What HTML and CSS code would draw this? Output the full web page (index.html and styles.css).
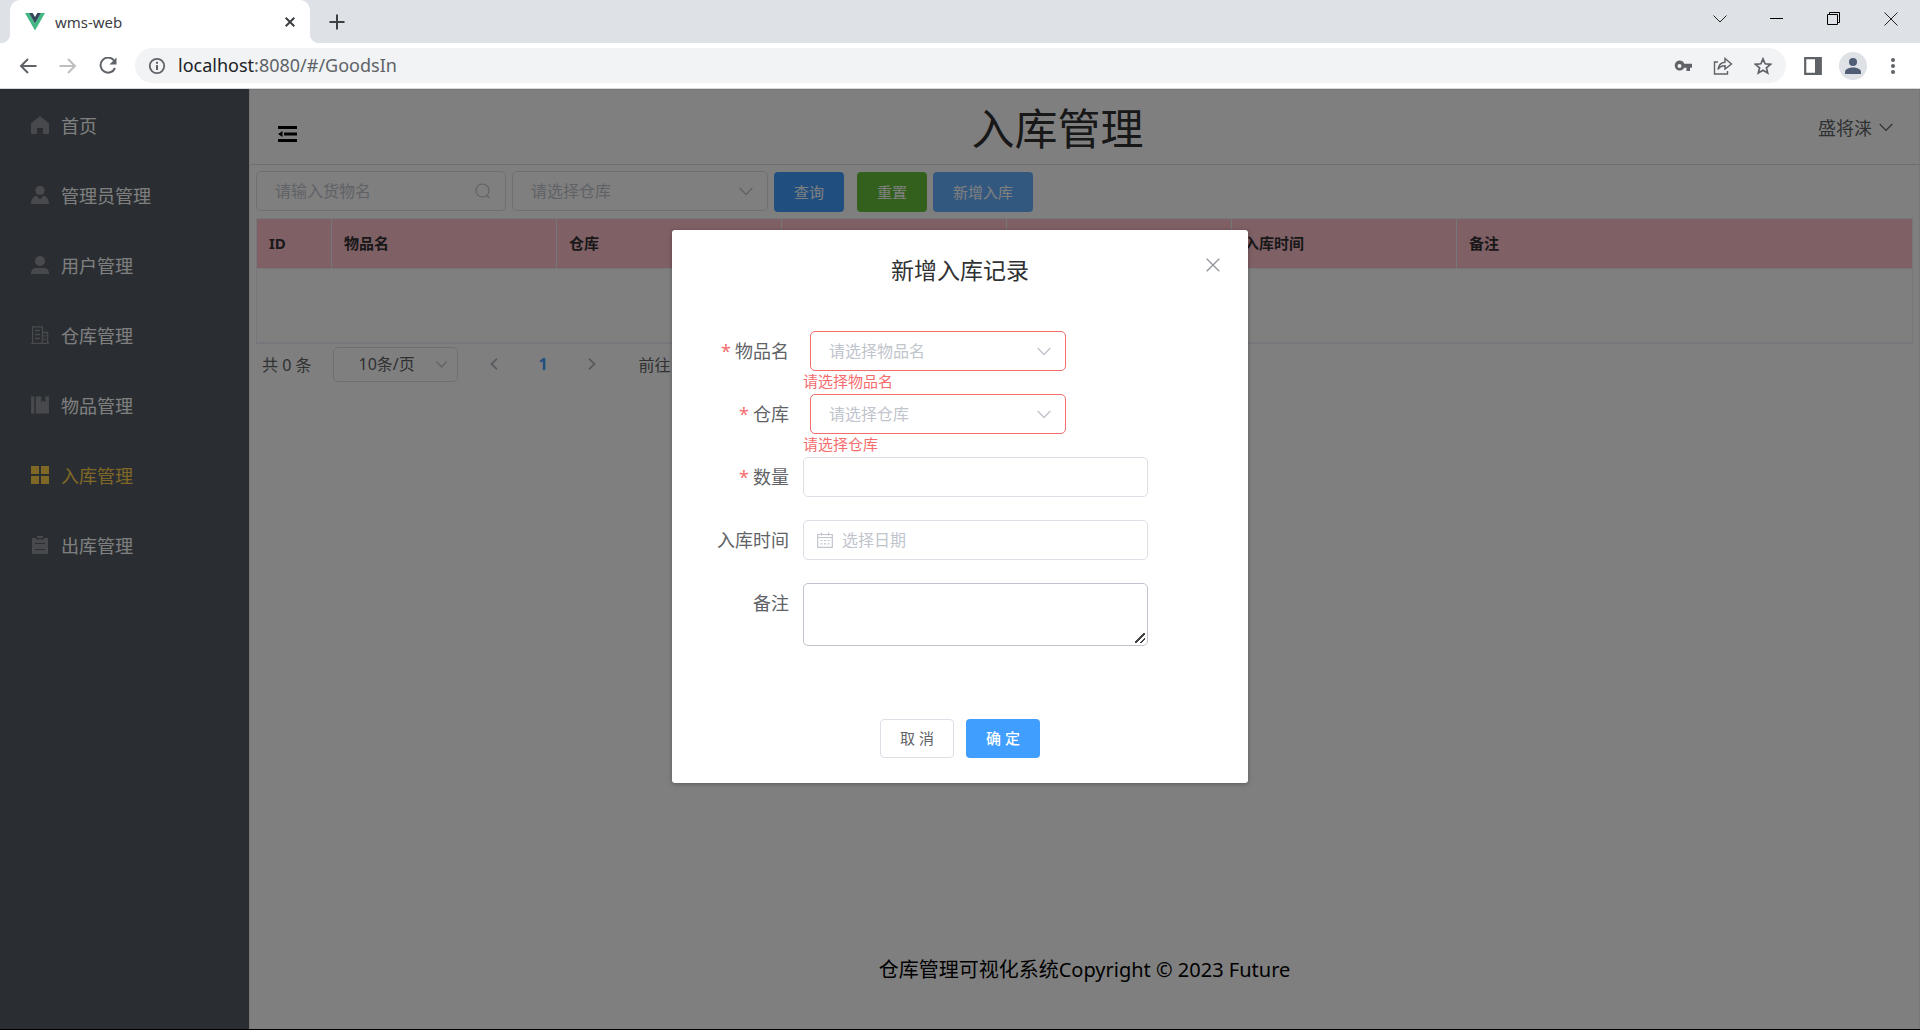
FILE: index.html
```html
<!DOCTYPE html>
<html lang="zh-CN">
<head>
<meta charset="utf-8">
<title>wms-web</title>
<link rel="stylesheet" href="styles.css">
</head>
<body>
<header class="browser">
  <div class="tab-strip">
    <div class="tab">
      <svg class="favicon" width="20" height="18" viewBox="0 0 20 18"><path fill="#41b883" d="M0 0h4l6 10.500 6-10.500h4L10 17.500z"/><path fill="#35495e" d="M4 0h3.700L10 4l2.300-4H16l-6 10.500z"/></svg>
      <span class="tab-title">wms-web</span>
      <button class="tab-close" aria-label="关闭标签页"><svg width="10" height="10" viewBox="0 0 10 10"><path d="M.7.7l8.600 8.600M9.300.7L.7 9.300" stroke="#3c4043" stroke-width="2"/></svg></button>
    </div>
    <button class="tab-new" aria-label="新标签页"><svg width="16" height="16" viewBox="0 0 16 16"><path d="M8 .5v15M.5 8h15" stroke="#3c4043" stroke-width="2"/></svg></button>
    <div class="window-controls">
      <button aria-label="搜索标签页"><svg width="14" height="8" viewBox="0 0 14 8"><path d="M.5.500L7 7 13.500.5" fill="none" stroke="#222"/></svg></button>
      <button aria-label="最小化"><svg width="13" height="3" viewBox="0 0 13 3"><path d="M0 1.500h13" stroke="#000"/></svg></button>
      <button aria-label="还原"><svg width="13" height="13" viewBox="0 0 13 13"><path d="M.5 2.500h10v10H.500zM2.500 2.500v-2h10v10h-2" fill="none" stroke="#000"/></svg></button>
      <button aria-label="关闭"><svg width="14" height="14" viewBox="0 0 14 14"><path d="M.5.500l13 13M13.500.500l-13 13" stroke="#222"/></svg></button>
    </div>
  </div>
  <div class="toolbar">
    <button aria-label="后退"><svg width="18" height="16" viewBox="0 0 18 16"><path d="M17.500 8H2M9 1L2 8l7 7" fill="none" stroke="#5f6368" stroke-width="2"/></svg></button>
    <button aria-label="前进"><svg width="18" height="16" viewBox="0 0 18 16"><path d="M.5 8H16M9 1l7 7-7 7" fill="none" stroke="#bdbfc1" stroke-width="2"/></svg></button>
    <button aria-label="重新加载"><svg width="18" height="18" viewBox="0 0 18 18"><path d="M15 3.500A7.500 7.500 0 1 0 16 11" fill="none" stroke="#5f6368" stroke-width="2"/><path d="M17.500.5v7h-7z" fill="#5f6368"/></svg></button>
    <div class="address">
      <svg width="18" height="18" viewBox="0 0 18 18"><circle cx="9" cy="9" r="7.200" fill="none" stroke="#5f6368" stroke-width="1.800"/><path d="M9 8v5M9 4.700v2" stroke="#5f6368" stroke-width="2"/></svg>
      <span class="url">localhost<span class="url-rest">:8080/#/GoodsIn</span></span>
      <button aria-label="密码"><svg width="18" height="12" viewBox="0 0 18 12"><path fill="#5f6368" fill-rule="evenodd" d="M5.500.5a5 5 0 0 1 4.700 3.300H18v4h-2V11h-3.500V7.800h-2.300A5 5 0 1 1 5.500.500zm0 3.500a2 2 0 1 0 0 4 2 2 0 0 0 0-4z"/></svg></button>
      <button aria-label="分享"><svg width="20" height="18" viewBox="0 0 20 18"><path d="M5 5H1.500v12h13v-3M5 12.500c.5-4.500 3-7 7-7.300V1.500L18.500 7 12 12V8.700c-3 0-5.500 1-7 3.800z" fill="none" stroke="#5f6368" stroke-width="1.400"/></svg></button>
      <button aria-label="收藏"><svg width="18" height="18" viewBox="0 0 18 18"><path d="M9 1.800l2.100 5 5.400.5-4.100 3.500 1.300 5.300L9 13.300l-4.700 2.800 1.300-5.300-4.100-3.500 5.400-.5z" fill="none" stroke="#5f6368" stroke-width="1.700"/></svg></button>
    </div>
    <button class="side-panel" aria-label="侧边栏"><svg width="18" height="18" viewBox="0 0 18 18"><path d="M1.200 1.200h15.600v15.600H1.200z" fill="none" stroke="#5f6368" stroke-width="2.200"/><path d="M11 1h6v16h-6z" fill="#5f6368"/></svg></button>
    <button aria-label="用户"><svg width="28" height="28" viewBox="0 0 28 28"><circle cx="14" cy="14" r="14" fill="#dee1e6"/><circle cx="14" cy="10" r="4" fill="#4f5d75"/><path d="M6 22v-2c0-3 4-4.500 8-4.500s8 1.500 8 4.500v2z" fill="#4f5d75"/></svg></button>
    <button aria-label="更多"><svg width="4" height="16" viewBox="0 0 4 16"><g fill="#5f6368"><circle cx="2" cy="2" r="2"/><circle cx="2" cy="8" r="2"/><circle cx="2" cy="14" r="2"/></g></svg></button>
  </div>
</header>

<div class="app">
  <nav class="sidebar">
    <a href="#/Home"><svg viewBox="0 0 18 18"><path d="M9 0L0 7.500V18h6v-6h6v6h6V7.500z"/></svg>首页</a>
    <a href="#/Admin"><svg viewBox="0 0 18 18"><circle cx="9" cy="4.500" r="4.600"/><path d="M0 18c0-4 2-7.500 5.500-8.500L9 13.500l3.500-4C16 10.500 18 14 18 18z"/></svg>管理员管理</a>
    <a href="#/User"><svg viewBox="0 0 18 18"><circle cx="9" cy="5" r="5"/><path d="M0 18c0-4 2-6 5-6h8c3 0 5 2 5 6z"/></svg>用户管理</a>
    <a href="#/Storage"><svg viewBox="0 0 18 18"><path d="M1.600 17V.800h9.800V17M11.400 6.500h5.200V17M0 17.300h18M4 4.500h5M4 8.500h5M4 12.500h5M12.500 9.800h2.500M12.500 13.300h2.500" fill="none" stroke="#909399" stroke-width="1.300"/></svg>仓库管理</a>
    <a href="#/Goods"><svg viewBox="0 0 18 18"><path d="M0 .5h3.300v17H0zM4.800.500h5.500v6l2-2 2 2v-6H18v17H4.800z"/></svg>物品管理</a>
    <a href="#/GoodsIn" class="active"><svg viewBox="0 0 18 18"><path d="M0 0h8v8H0zM10 0h8v8h-8zM0 10h8v8H0zM10 10h8v8h-8z"/></svg>入库管理</a>
    <a href="#/GoodsOut"><svg viewBox="0 0 18 18"><path fill-rule="evenodd" d="M6 0h6v2H6zM1 2h4v1.500h8V2h4v16H1zM4 7v1h10V7zM4 13v1h10v-1z"/></svg>出库管理</a>
  </nav>

  <div class="container">
    <header class="page-header">
      <button class="fold" aria-label="折叠菜单"><svg width="19" height="16" viewBox="0 0 19 16"><path d="M0 0h19v3H0zM6 6.500h13v3H6zM0 13h19v3H0zM0 8l4.500-3v6z"/></svg></button>
      <h1>入库管理</h1>
      <button class="user">盛将涞<svg width="14" height="9" viewBox="0 0 14 9"><path d="M.7 1L7 7.500 13.300 1" fill="none" stroke="#606266" stroke-width="1.200"/></svg></button>
    </header>

    <main>
      <div class="filters">
        <div class="field search">
          <input type="text" placeholder="请输入货物名" aria-label="货物名">
          <svg width="16" height="16" viewBox="0 0 16 16"><circle cx="7.500" cy="7.500" r="6.500" fill="none" stroke="#c0c4cc" stroke-width="1.200"/><path d="M11.500 12.500l3 2.500" stroke="#c0c4cc" stroke-width="1.200"/></svg>
        </div>
        <div class="field select">
          <select aria-label="仓库"><option>请选择仓库</option></select>
          <svg width="14" height="9" viewBox="0 0 14 9"><path d="M.7 1L7 7.500 13.300 1" fill="none" stroke="#c0c4cc" stroke-width="1.400"/></svg>
        </div>
        <button class="btn primary">查询</button>
        <button class="btn success">重置</button>
        <button class="btn light">新增入库</button>
      </div>

      <table>
        <colgroup><col class="col-id"><col class="col"><col class="col"><col class="col"><col class="col"><col class="col"><col></colgroup>
        <thead><tr><th>ID</th><th>物品名</th><th>仓库</th><th></th><th></th><th>入库时间</th><th>备注</th></tr></thead>
        <tbody><tr><td colspan="7"></td></tr></tbody>
      </table>

      <div class="pagination">
        <span>共 0 条</span>
        <div class="field page-size">
          <select aria-label="每页条数"><option>10条/页</option></select>
          <svg width="11" height="7" viewBox="0 0 11 7"><path d="M.5.500l5 5.500 5-5.500" fill="none" stroke="#c0c4cc" stroke-width="1.200"/></svg>
        </div>
        <button class="pager" aria-label="上一页"><svg width="8" height="12" viewBox="0 0 8 12"><path d="M7 .7L1.500 6 7 11.300" fill="none" stroke="#b0b4bc" stroke-width="1.800"/></svg></button>
        <button class="pager current">1</button>
        <button class="pager" aria-label="下一页"><svg width="8" height="12" viewBox="0 0 8 12"><path d="M1 .7L6.500 6 1 11.300" fill="none" stroke="#b0b4bc" stroke-width="1.800"/></svg></button>
        <span class="jump">前往</span>
      </div>
    </main>

    <footer class="page-footer">仓库管理可视化系统Copyright © 2023 Future</footer>
  </div>

  <div class="overlay">
    <section class="dialog" role="dialog" aria-labelledby="dialog-title">
      <h2 id="dialog-title">新增入库记录</h2>
      <button class="dialog-close" aria-label="关闭"><svg width="14" height="14" viewBox="0 0 14 14"><path d="M.7.700l12.600 12.600M13.300.700L.7 13.300" stroke="#909399" stroke-width="1.300"/></svg></button>
      <form>
        <div class="row">
          <label class="required" for="goods">物品名</label>
          <div class="control">
            <div class="field select error">
              <select id="goods"><option>请选择物品名</option></select>
              <svg width="14" height="9" viewBox="0 0 14 9"><path d="M.7 1L7 7.500 13.300 1" fill="none" stroke="#c0c4cc" stroke-width="1.400"/></svg>
            </div>
            <p class="message">请选择物品名</p>
          </div>
        </div>
        <div class="row">
          <label class="required" for="storage">仓库</label>
          <div class="control">
            <div class="field select error">
              <select id="storage"><option>请选择仓库</option></select>
              <svg width="14" height="9" viewBox="0 0 14 9"><path d="M.7 1L7 7.500 13.300 1" fill="none" stroke="#c0c4cc" stroke-width="1.400"/></svg>
            </div>
            <p class="message">请选择仓库</p>
          </div>
        </div>
        <div class="row">
          <label class="required" for="count">数量</label>
          <div class="control"><div class="field"><input id="count" type="text"></div></div>
        </div>
        <div class="row">
          <label for="date">入库时间</label>
          <div class="control">
            <div class="field date">
              <svg width="16" height="16" viewBox="0 0 16 16"><path d="M.7 2.500h14.600v12.800H.7zM.7 5.500h14.600M4.500.500v3M11.500.500v3M3.500 8.500h2M7 8.500h2M10.500 8.500h2M3.500 11.800h2M7 11.800h2M10.500 11.800h2" fill="none" stroke="#c0c4cc" stroke-width="1.200"/></svg>
              <input id="date" type="text" placeholder="选择日期">
            </div>
          </div>
        </div>
        <div class="row">
          <label for="remark">备注</label>
          <div class="control"><textarea id="remark"></textarea></div>
        </div>
        <div class="actions">
          <button type="button" class="btn plain">取 消</button>
          <button type="button" class="btn primary confirm">确 定</button>
        </div>
      </form>
    </section>
  </div>
</div>
</body>
</html>
```
FILE: styles.css
```css
* { box-sizing: border-box; }

body {
  margin: 0;
  min-height: 100vh;
  display: flex;
  flex-direction: column;
  border-bottom: 1px solid #000;
  background: #fff;
  color: #000;
  font-family: "Noto Sans", "Noto Sans CJK SC", sans-serif;
  font-size: 16px;
}

button, input, select, textarea { font: inherit; }
button {
  display: flex;
  align-items: center;
  justify-content: center;
  padding: 0;
  border: 0;
  background: none;
  color: inherit;
}
svg { display: block; flex: none; }

/* Browser frame */
.browser { border-bottom: 1px solid #d5d7da; }
.tab-strip {
  display: flex;
  height: 43px;
  padding: 0 1px 0 10px;
  background: #dee1e6;
}
.tab {
  position: relative;
  display: flex;
  align-items: center;
  gap: 10px;
  width: 300px;
  padding: 0 10px 0 15px;
  border-radius: 10px 10px 0 0;
  background: #fff;
}
.tab::before, .tab::after {
  content: "";
  position: absolute;
  bottom: 0;
  width: 10px;
  height: 10px;
}
.tab::before { left: -10px; background: radial-gradient(circle at 0 0, #dee1e6 10px, #fff 11px); }
.tab::after { right: -10px; background: radial-gradient(circle at 100% 0, #dee1e6 10px, #fff 11px); }
.tab-title { flex: 1; font-size: 15px; color: #3c4043; }
.tab-close { width: 20px; height: 20px; }
.tab-new { width: 54px; }
.window-controls { display: flex; height: 37px; margin-left: auto; }
.window-controls button { width: 57px; }
.toolbar {
  display: flex;
  align-items: center;
  height: 45px;
  padding: 0 7px 0 8px;
}
.toolbar button { width: 40px; height: 35px; }
.address {
  flex: 1;
  display: flex;
  align-items: center;
  height: 35px;
  margin: 0 7px;
  padding: 0 3px 0 13px;
  border-radius: 18px;
  background: #f1f3f4;
}
.url { flex: 1; padding: 0 0 2px 12px; font-size: 18px; color: #202124; }
.url-rest { color: #5f6368; }

/* Application shell */
.app { position: relative; flex: 1; display: flex; }
.sidebar { width: 249px; padding-top: 1px; background: #545c64; }
.sidebar a {
  display: flex;
  align-items: center;
  gap: 12px;
  height: 70px;
  padding-left: 31px;
  color: #fff;
  font-size: 18px;
  text-decoration: none;
}
.sidebar svg { width: 18px; height: 18px; fill: #909399; }
.sidebar .active { color: #ffd04b; }
.sidebar .active svg { fill: #ffd04b; }

.container {
  flex: 1;
  display: flex;
  flex-direction: column;
  border: 1px solid #eee;
  border-bottom: 0;
}
.page-header {
  display: flex;
  align-items: center;
  height: 75px;
  padding: 0 26px 0 28px;
  border-bottom: 1px solid #dcdcdc;
}
.page-header h1 {
  flex: 1;
  margin: 0;
  padding-top: 4px;
  color: #303133;
  font-size: 43px;
  font-weight: 400;
  line-height: 70px;
  text-align: center;
}
.fold { padding-top: 14px; }
.user { gap: 7px; color: #606266; font-size: 18px; }

main { flex: 1; padding: 6px; }
.filters { display: flex; gap: 6px; height: 47px; }

/* Fields: the icon shares the grid cell with its control */
.field { display: grid; align-items: center; height: 40px; }
.field > * { grid-area: 1 / 1; }
.field input, .field select {
  width: 100%;
  height: 100%;
  padding: 0 18px;
  border: 1px solid #dcdfe6;
  border-radius: 5px;
  outline: 0;
  appearance: none;
  background: #fff;
  color: #c0c4cc;
}
.field input::placeholder { color: #c0c4cc; }
.field svg { z-index: 1; justify-self: end; margin-right: 15px; pointer-events: none; }
.search { width: 250px; }
.select { width: 256px; }
.error select { border-color: #f56c6c; }

.btn {
  height: 40px;
  margin-top: 1px;
  padding: 0 20px 2px;
  border-radius: 4px;
  color: #fff;
  font-size: 15px;
}
.primary { background: #409eff; }
.success { margin-left: 7px; background: #67c23a; }
.light { background: #66b1ff; }
.plain { border: 1px solid #dcdfe6; color: #606266; }

table {
  width: 100%;
  border: 1px solid #ebeef5;
  border-collapse: collapse;
  table-layout: fixed;
}
.col-id { width: 75px; }
.col { width: 225px; }
th {
  height: 50px;
  padding: 0 12px 2px;
  border: 1px solid #ebeef5;
  background: #ffc0cb;
  color: #303133;
  font-size: 15px;
  font-weight: 700;
  text-align: left;
}
td { height: 74px; padding: 0; border-bottom: 2px solid #ebeef5; }

.pagination { display: flex; align-items: center; padding: 3px 6px; color: #606266; }
.page-size { width: 125px; height: 35px; margin: 0 11px 0 22px; }
.page-size select { padding: 0 24px; color: #606266; }
.page-size svg { margin-right: 11px; }
.pager { width: 49px; height: 35px; }
.current { color: #409eff; font-weight: 700; }
.jump { margin-left: 22px; }

.page-footer { height: 97px; line-height: 75px; font-size: 20px; text-align: center; }

/* Dialog */
.overlay { position: absolute; inset: 0; z-index: 2; padding-top: 141px; background: rgba(0, 0, 0, .5); }
.dialog {
  position: relative;
  width: 30%;
  margin: 0 auto;
  padding: 25px;
  border-radius: 3px;
  background: #fff;
  box-shadow: 0 1px 4px rgba(0, 0, 0, .3);
}
.dialog h2 {
  margin: 0 0 46px;
  color: #303133;
  font-size: 23px;
  font-weight: 400;
  line-height: 30px;
  text-align: center;
}
.dialog-close { position: absolute; top: 25px; right: 25px; width: 20px; height: 20px; }
.row { display: flex; min-height: 63px; }
.row label {
  width: 106px;
  padding-right: 14px;
  color: #606266;
  font-size: 18px;
  line-height: 40px;
  text-align: right;
}
.required::before { content: "*"; margin-right: 4px; color: #f56c6c; }
.control { width: 345px; }
.control .select { margin-left: 7px; }
.message { margin: 0; color: #f56c6c; font-size: 15px; line-height: 20px; }
.date input { padding-left: 38px; }
.field.date svg { justify-self: start; margin-left: 14px; }
textarea {
  display: block;
  width: 100%;
  height: 63px;
  border: 1px solid #c0c4cc;
  border-radius: 5px;
  outline: 0;
  resize: vertical;
}
textarea::-webkit-resizer {
  background: linear-gradient(135deg, transparent 44%, #444 45% 55%, transparent 56% 70%, #444 71% 81%, transparent 82%) 3px 3px / 10px 10px no-repeat;
}
.actions { display: flex; justify-content: center; gap: 12px; padding-top: 72px; }
.actions .btn { height: 39px; width: 74px; padding: 0 0 2px; }
.confirm { font-weight: 500; }
```
